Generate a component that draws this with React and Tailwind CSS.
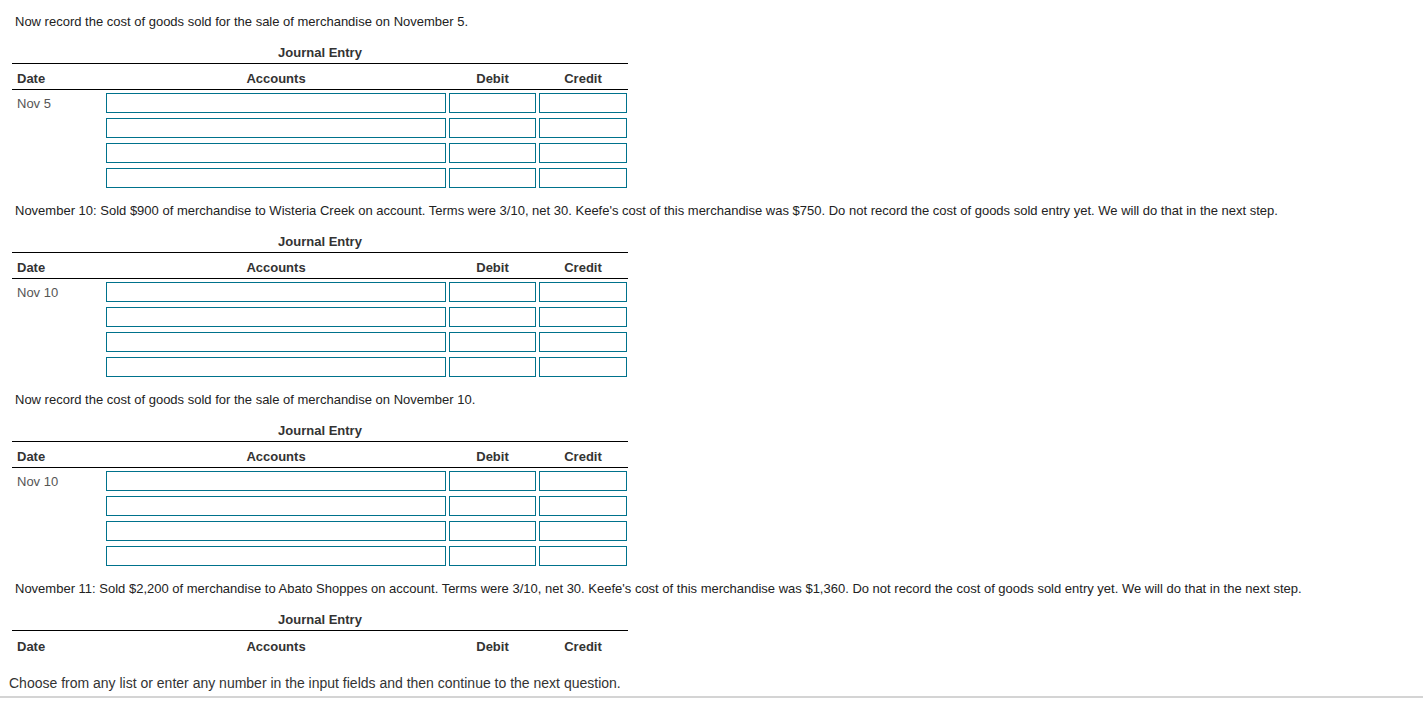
import React from "react";

const blocks = [
  {
    text: "Now record the cost of goods sold for the sale of merchandise on November 5.",
    date: "Nov 5",
  },
  {
    text: "November 10: Sold $900 of merchandise to Wisteria Creek on account. Terms were 3/10, net 30. Keefe's cost of this merchandise was $750. Do not record the cost of goods sold entry yet. We will do that in the next step.",
    date: "Nov 10",
  },
  {
    text: "Now record the cost of goods sold for the sale of merchandise on November 10.",
    date: "Nov 10",
  },
  {
    text: "November 11: Sold $2,200 of merchandise to Abato Shoppes on account. Terms were 3/10, net 30. Keefe's cost of this merchandise was $1,360. Do not record the cost of goods sold entry yet. We will do that in the next step.",
    date: null,
  },
];

const inputCls =
  "h-[20px] border border-[#00728c] bg-white outline-none px-1 text-[13px]";

const JournalHeader = ({ last }) => (
  <>
    <div className="pt-[17px] pb-[3px] border-b border-black">
      <div className="h-[14px] leading-[14px] text-center font-bold text-[#333] w-[616px]">
        Journal Entry
      </div>
    </div>
    <div
      className={`flex ${last ? "pt-[9px]" : "pt-[8px]"} h-[14px] leading-[14px] box-content font-bold text-[#333]`}
    >
      <div className="w-[94px] pl-[5px]">Date</div>
      <div className="w-[340px] text-center">Accounts</div>
      <div className="w-[3px]" />
      <div className="w-[87px] text-center">Debit</div>
      <div className="w-[3px]" />
      <div className="w-[88px] text-center">Credit</div>
    </div>
  </>
);

const EntryTable = ({ date }) => (
  <div className="ml-[12px] w-[616px]">
    <JournalHeader last={!date} />
    {date && <div className="pb-[3px] border-b border-black" />}
    {date && (
      <div className="flex flex-col gap-[5px] mt-[3px]">
        {[0, 1, 2, 3].map((i) => (
          <div key={i} className="flex items-center h-[20px]">
            <div className="w-[94px] pl-[5px] text-[#555] leading-[14px] mt-[2px]">
              {i === 0 ? date : ""}
            </div>
            <input className={`${inputCls} w-[340px]`} />
            <input className={`${inputCls} w-[87px] ml-[3px]`} />
            <input className={`${inputCls} w-[88px] ml-[3px]`} />
          </div>
        ))}
      </div>
    )}
  </div>
);

export default function App() {
  return (
    <div
      className="w-[1423px] h-[703px] bg-white text-[13px] overflow-hidden"
      style={{ fontFamily: '"Liberation Sans", Arial, sans-serif' }}
    >
      <div className="pt-[15px]">
        {blocks.map((b, i) => (
          <div key={i} className={i === 0 ? "" : "mt-[16px]"}>
            <p className="pl-[15px] h-[14px] leading-[14px] text-[#222] whitespace-nowrap">
              {b.text}
            </p>
            <EntryTable date={b.date} />
          </div>
        ))}
      </div>
      <div className="mt-[21px] pl-[9px] pb-[5px] border-b-2 border-[#d4d4d4] text-[14px] leading-[16px] text-[#333]">
        Choose from any list or enter any number in the input fields and then continue to the next question.
      </div>
    </div>
  );
}
